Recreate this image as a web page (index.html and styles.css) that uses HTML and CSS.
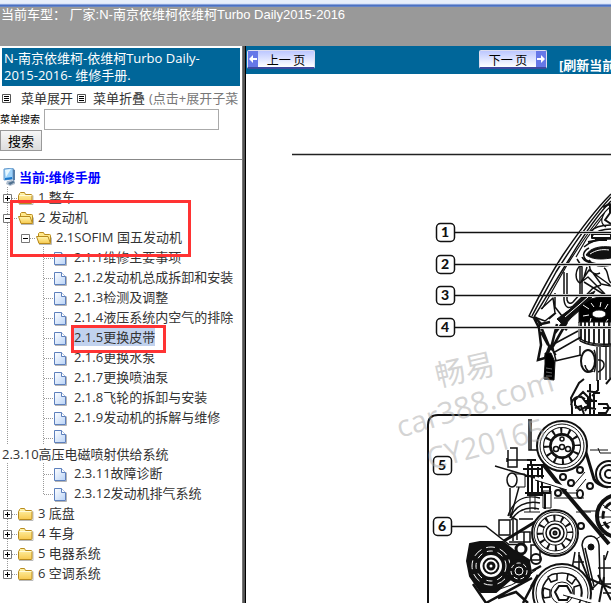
FILE: index.html
```
<!DOCTYPE html>
<html lang="zh-CN">
<head>
<meta charset="utf-8">
<title>维修手册</title>
<link rel="stylesheet" href="styles.css">
</head>
<body>
<svg class="defs" aria-hidden="true">
  <defs>
    <linearGradient id="gold" x1="0" y1="0" x2="0" y2="1"><stop offset="0" stop-color="#fff6b0"/><stop offset="1" stop-color="#f7c94e"/></linearGradient>
    <linearGradient id="paper" x1="0" y1="0" x2="1" y2="1"><stop offset="0" stop-color="#fff"/><stop offset="1" stop-color="#b9d3f7"/></linearGradient>
    <symbol id="folder" viewBox="0 0 18 20"><path d="M1 17.500h14v-9" fill="none" stroke="#bbb"/><path d="M.5 8.500q0-1 1-1v-1l1-1h4l1 2h5.500q1 0 1 1v7q0 1-1 1h-11.500q-1 0-1-1z" fill="url(#gold)" stroke="#b88a1d"/><path d="M1.500 8.500h12" stroke="#fffbd8"/></symbol>
    <symbol id="open" viewBox="0 0 18 20"><path d="M3 17.500h12.500v-7" fill="none" stroke="#bbb"/><path d="M2.500 10v-3.500l1-1h4l1 2h5q1 0 1 1v7h-12z" fill="#ffe88a" stroke="#b88a1d"/><path d="M.5 9.500h11.500l2.500 7h-11.500z" fill="url(#gold)" stroke="#b88a1d"/></symbol>
    <symbol id="doc" viewBox="0 0 18 20"><path d="M1 18.500h11.500v-9" fill="none" stroke="#b5b5b5"/><path d="M.5 5.500h7l4 4v8h-11z" fill="url(#paper)" stroke="#5d80bd"/><path d="M7.500 5.500v4h4" fill="#fff" stroke="#5d80bd"/></symbol>
    <symbol id="plus" viewBox="0 0 18 20"><path d="M3.500 7.500h8v8h-8z" fill="#fff" stroke="#777"/><path d="M5 11.500h5M7.500 9v5" stroke="#000"/></symbol>
    <symbol id="minus" viewBox="0 0 18 20"><path d="M3.500 7.500h8v8h-8z" fill="#fff" stroke="#777"/><path d="M5 11.500h5" stroke="#000"/></symbol>
    <symbol id="list" viewBox="0 0 9 9"><path d="M.5.5h8v8h-8z" fill="#fff" stroke="#555"/><path d="M2 2.500h5M2 4.500h5M2 6.500h5" stroke="#000"/></symbol>
  </defs>
</svg>
<div class="strip"></div>
<header class="model">当前车型： 厂家:N-南京依维柯依维柯Turbo Daily2015-2016</header>
<div class="frames">
  <aside class="sidebar">
    <h1 class="book">N-南京依维柯-依维柯Turbo Daily-<br>2015-2016- 维修手册.</h1>
    <div class="tools">
      <svg class="mini"><use href="#list"/></svg><a href="#">菜单展开</a>
      <svg class="mini"><use href="#list"/></svg><a href="#">菜单折叠</a>
      <span class="hint">(点击+展开子菜</span>
    </div>
    <form class="search">
      <label for="q">菜单搜索</label><input id="q" type="text">
      <button type="button">搜索</button>
    </form>
    <div class="current">
      <svg class="pc" viewBox="0 0 14 18"><path d="M1 1l9-1v11l-9 1z" fill="#9fd3fa" stroke="#6599cc"/><path d="M2 2l6-1-5 8z" fill="#e9f8ff"/><path d="M2 10l7-1v2l-7 1z" fill="#1676cc"/><path d="M10 1l2 1v10l-2 1z" fill="#577ea7"/><path d="M4 13l5-1 3 2v2l-5 2-4-2z" fill="#aebdce"/><path d="M5 15l5-2 2 1-5 3z" fill="#50718f"/></svg>
      <a href="#">当前:维修手册</a>
    </div>
    <ul class="tree">
      <li class="root"><div class="row branch"><svg class="knob"><use href="#plus"/></svg><svg class="icon"><use href="#folder"/></svg><a href="#">1 整车</a></div></li>
      <li class="root marked">
        <div class="row branch"><svg class="knob"><use href="#minus"/></svg><svg class="icon"><use href="#open"/></svg><a href="#">2 发动机</a></div>
        <ul>
          <li>
            <div class="row branch"><svg class="knob"><use href="#minus"/></svg><svg class="icon"><use href="#open"/></svg><a href="#">2.1SOFIM 国五发动机</a></div>
            <ul class="pages">
              <li class="row leaf"><svg class="icon"><use href="#doc"/></svg><a href="#">2.1.1维修主要事项</a></li>
              <li class="row leaf"><svg class="icon"><use href="#doc"/></svg><a href="#">2.1.2发动机总成拆卸和安装</a></li>
              <li class="row leaf"><svg class="icon"><use href="#doc"/></svg><a href="#">2.1.3检测及调整</a></li>
              <li class="row leaf"><svg class="icon"><use href="#doc"/></svg><a href="#">2.1.4液压系统内空气的排除</a></li>
              <li class="row leaf"><svg class="icon"><use href="#doc"/></svg><a class="selected" href="#">2.1.5更换皮带</a></li>
              <li class="row leaf"><svg class="icon"><use href="#doc"/></svg><a href="#">2.1.6更换水泵</a></li>
              <li class="row leaf"><svg class="icon"><use href="#doc"/></svg><a href="#">2.1.7更换喷油泵</a></li>
              <li class="row leaf"><svg class="icon"><use href="#doc"/></svg><a href="#">2.1.8飞轮的拆卸与安装</a></li>
              <li class="row leaf"><svg class="icon"><use href="#doc"/></svg><a href="#">2.1.9发动机的拆解与维修</a></li>
              <li class="wrapped"><div class="row leaf"><svg class="icon"><use href="#doc"/></svg></div><a href="#">2.3.10高压电磁喷射供给系统</a></li>
              <li class="row leaf"><svg class="icon"><use href="#doc"/></svg><a href="#">2.3.11故障诊断</a></li>
              <li class="row leaf last"><svg class="icon"><use href="#doc"/></svg><a href="#">2.3.12发动机排气系统</a></li>
            </ul>
          </li>
        </ul>
      </li>
      <li class="root"><div class="row branch"><svg class="knob"><use href="#plus"/></svg><svg class="icon"><use href="#folder"/></svg><a href="#">3 底盘</a></div></li>
      <li class="root"><div class="row branch"><svg class="knob"><use href="#plus"/></svg><svg class="icon"><use href="#folder"/></svg><a href="#">4 车身</a></div></li>
      <li class="root"><div class="row branch"><svg class="knob"><use href="#plus"/></svg><svg class="icon"><use href="#folder"/></svg><a href="#">5 电器系统</a></div></li>
      <li class="root end"><div class="row branch"><svg class="knob"><use href="#plus"/></svg><svg class="icon"><use href="#folder"/></svg><a href="#">6 空调系统</a></div></li>
    </ul>
  </aside>
  <div class="divider"></div>
  <main class="viewer">
    <nav class="pager">
      <button class="turn" type="button"><svg viewBox="0 0 10 16"><path d="M0 0h10v16H0z" fill="#6678e8"/><path d="M1 8l4-4v3h4v2H5v3z" fill="#fff"/></svg><span>上一 页</span></button>
      <button class="turn" type="button"><span>下一 页</span><svg viewBox="0 0 10 16"><path d="M0 0h10v16H0z" fill="#6678e8"/><path d="M9 8L5 4v3H1v2h4v3z" fill="#fff"/></svg></button>
      <a href="#">[刷新当前</a>
    </nav>
    <svg class="figure" viewBox="246 74 365 529" role="img" aria-label="发动机皮带示意图">
      <path d="M292 154.500h319" stroke="#222" stroke-width="1.500"/>
      <g fill="none" stroke="#111" stroke-linejoin="round">
        <path d="M611 194C594 211 580 230 563 255C548 278 537 300 529 316l5 2M611 201C597 215 585 233 570 258C556 280 545 299 534 317M611 197C590 220 575 242 556 272C548 287 538 304 532 316" stroke-width="1.500"/>
        <path d="M611 206C596 220 582 242 567 265L542 309M602 218l-15 20-11 19M605 212c-4 7-5 11 1 15" stroke-width="1.200"/>
        <path d="M590 232c4-5 10-7 21-7M592 236c5-6 12-7 19-7M584 247c6-5 16-9 27-8M589 248c-6 3-7 8-3 12 8 5 15 4 25 4M582 257c3 7 14 8 29 7M589 260c4 6 13 7 22 5" stroke-width="1.500"/>
        <path d="M586 255c5-8 15-9 25-8v11c-12 2-19 1-25-3z" fill="#111"/>
        <path d="M590 254c6-4 12-5 19-4" stroke="#fff"/>
        <path d="M592 234h19v4h-19zM595 240h12M588 242l22-4M603 207l7-3v9l-5 7 6 4" stroke-width="2"/>
        <path d="M564 272v28c1 8 5 9 9 6l9-9v-30l-5-8M567 273v27c1 4 4 4 6 2l7-8v-29M555 293v14l7 9 13-9 18-19 8-3M541 309l12-11 2 15-10 8-11-4M549 319l7-6" stroke-width="1.500"/>
        <path d="M582 264c-8 6-7 16-2 19l8-6 17 17M581 282l8-12 21 15M587 267l-3 10M590 263c-2 8 4 13 10 10M604 268c5 2 3 12 7 15M584 282l24 15M593 273l8 11 10 2" stroke-width="1.500"/>
        <path d="M557 319l12-9 14-13 12-6-6 11-18 16-7 8z" fill="#111"/><path d="M565 317l14-12 9-8" stroke="#fff"/>
      </g>
      <g stroke="#111">
        <path d="M579 307l12-8 8-2h12v26h-32z"/><ellipse cx="599" cy="314" rx="7" ry="4" fill="#fff"/>
        <path d="M583 305l6 4M583 316l6-1M591 303l3 4M601 302l-1 5M591 318l-1 4M608 304l-3 5M608 319l-2 3" stroke="#fff" stroke-width="1"/>
        <path d="M579 322h32v23c-11 1-23 0-32-5z" fill="#fff"/>
        <path d="M581 322v18M585 322v20M589 322v21M594 322v21M599 322v21M604 322v22M609 322v22" stroke-width="1.800"/>
        <path d="M579 338c8 6 19 7 32 6M580 341c9 5 20 6 31 5M597 347v34M600 347v33M606 347v33M610 347v31" fill="none" stroke-width="1.400"/>
        <ellipse cx="588" cy="361" rx="7" ry="11" fill="#fff" stroke-width="2"/><path d="M585 365c1 6 5 8 8 6M580 346v10M594 350c2 3 2 19 0 22M598 360c7-1 9 8 0 12" fill="none" stroke-width="1.500"/>
        <path d="M534 318l5 10 2 17-3 15 7-2 5-13M535 317l6 7 9-2M539 322l10 24M557 324l-5 20-6 13M567 322l-7 12-9 16M541 332l7 13M555 333l6-8 6 5" fill="none" stroke-width="2.500"/>
        <path d="M553 353l28-16M555 361l26-6M552 345l26-14M553 348l3 13M550 347l6 8" fill="none" stroke-width="1.500"/>
        <path d="M545 353h6l4 9-1 18-10-1 1-15z"/><path d="M546 368l6 1M546 372l6 1M546 376l6 0" stroke="#666"/>
        <path d="M572 414l-1-16 8-15 10-3 1 14 6 5-1 9 16 2v4z" fill="#fff" stroke="none"/>
        <path d="M572 414v-6l-1-10 8-15 5-4M571 405c2-9 8-10 14-6M575 400l8-8 5 5v9l-8 4-5-5zM581 396l6 8M575 408l6-2 3 8M590 384v30M594 391v23M598 380v10l-6 6M587 391l13 2M585 401h12M584 407l12 2M598 404h9l2 4-3 5h-8M603 408h8M592 399l-7 12M606 384l5-6" fill="none" stroke-width="2"/>
      </g>
      <g fill="none" stroke="#111">
        <path d="M428 603V425q0-10 10-10h173" stroke-width="2"/>
        <path d="M531 419v31M529 419v31h10M510 448h7v19h-9v-17M508 460h22M507 458v4M510 488v28M519 487l-8 29" stroke-width="1.500"/>
        <ellipse cx="512" cy="480" rx="5" ry="7" fill="#fff" stroke-width="1.500"/><path d="M515 474h10v13h-9"/>
        <path d="M528 465h14v30h-14zM532 464v31M538 467v28M523 469h19M525 476h19M525 493h18M540 487h10v6h-10M531 459v7M527 460h9M545 493v16" stroke-width="2"/>
        <path d="M508 516c5-15 16-22 32-18M510 518c5-12 16-18 30-15M511 520c7-10 16-14 28-11" stroke-width="1.500"/>
        <path d="M543 491h8v17h-8zM530 496v16M535 494v16M524 512h16M554 498h30M560 493h21M576 512h15M572 487l13-15M576 491l10-12M590 450h18M598 448l2 5h11M583 511h14l3-4"/>
        <g fill="#fff" stroke-width="2"><circle cx="563" cy="477" r="3"/><circle cx="571" cy="483" r="3"/><circle cx="580" cy="470" r="3"/><circle cx="590" cy="486" r="3"/><circle cx="558" cy="493" r="3"/><ellipse cx="580" cy="494" rx="3" ry="4"/></g>
        <path d="M543 464l22 28 44 52" stroke-width="4"/><path d="M584 446l10 33q3 6 14 8" stroke-width="3"/>
        <path d="M504 541l31-19" stroke-width="3"/><path d="M485 592q27-3 51-22M590 543l19-12"/>
        <circle cx="609" cy="474" r="13" fill="#fff" stroke-width="2"/><circle cx="609" cy="474" r="9" stroke-width="2"/><circle cx="609" cy="474" r="4" stroke-width="2"/>
        <circle cx="618" cy="516" r="21" fill="#fff" stroke-width="4"/><circle cx="618" cy="516" r="15" stroke-width="3" stroke-dasharray="8 3"/><path d="M603 505l8 6M598 517h13M601 526l10-4"/>
        <path d="M499 520h11v15h-11zM510 516l7 4v20M513 519v22M519 519h14M509 542h22M524 532v13M519 532h11v10M531 545h9v15h-9z" stroke-width="1.500"/>
        <circle cx="521" cy="549" r="5" fill="#fff" stroke-width="3"/><circle cx="536" cy="559" r="5" stroke-width="2"/><circle cx="581" cy="526" r="3" stroke-width="2"/>
        <path d="M582 545q1-9 9-9 7 1 8 9l1 36-8 8z" fill="#fff" stroke-width="1.500"/><path d="M585 548l9 38M575 552l-3 17M579 552v17M574 562h10M598 568h13M602 584h9M603 593h8M604 555v29M608 551l-3 9" stroke-width="1.500"/><circle cx="591" cy="547" r="3" fill="#111"/>
        <path d="M579 555l14 35M590 579l21 9M598 575l13 25M604 577l-5 26" stroke-width="2"/>
      </g>
      <g fill="none" stroke="#111">
        <circle cx="562" cy="446" r="25" fill="#fff" stroke-width="2"/><circle cx="562" cy="446" r="22"/><circle cx="562" cy="446" r="15" stroke-width="8"/><circle cx="562" cy="446" r="15.500" stroke="#fff" stroke-width="5" stroke-dasharray="6 2.100"/><circle cx="562" cy="446" r="11" fill="#fff" stroke-width="1.500"/>
      </g>
      <g fill="#fff" stroke="#111" stroke-width="1.500"><circle cx="562" cy="439" r="2"/><circle cx="556" cy="449" r="2.500"/><circle cx="568" cy="449" r="2.500"/><circle cx="562" cy="447" r="2.500"/></g>
      <g fill="none" stroke="#111">
        <circle cx="555" cy="533" r="23" fill="#fff" stroke-width="2"/><circle cx="555" cy="533" r="21"/><circle cx="555" cy="533" r="15" stroke-width="7"/><circle cx="555" cy="533" r="15" stroke="#fff" stroke-width="5" stroke-dasharray="5.800 2.050"/><circle cx="555" cy="533" r="9" fill="#fff" stroke-width="1.500"/><circle cx="555" cy="533" r="5" stroke-width="2"/><circle cx="555" cy="533" r="1.500" stroke-width="2"/>
      </g>
      <g fill="none" stroke="#111">
        <path d="M470 544l10-2h23l10 8 16 10 2 13-19 5-16 14h-15l-11-16-3-15z" fill="#111" stroke-width="2"/>
        <circle cx="491" cy="566" r="19" stroke="#fff" stroke-dasharray="9 5"/><circle cx="491" cy="566" r="15" stroke="#fff" stroke-dasharray="6 5"/>
        <circle cx="491" cy="566" r="12" fill="#fff" stroke-width="2"/><circle cx="491" cy="566" r="7.500" stroke-width="2"/><circle cx="491" cy="566" r="3" stroke-width="3"/>
        <circle cx="519" cy="571" r="12" fill="#111"/><circle cx="519" cy="571" r="8" stroke="#fff" stroke-dasharray="4 3"/><circle cx="519" cy="571" r="4" stroke="#fff"/>
        <path d="M473 584l13 19M486 603l46-25M498 598l18-6 12 11M533 584l-10 19M532 571l9-5M538 575l-7 12" stroke-width="2.500"/>
        <circle cx="562" cy="593" r="29" fill="#fff" stroke-width="2"/><circle cx="562" cy="593" r="26"/><circle cx="562" cy="593" r="20" stroke-width="1.500"/>
        <g fill="#fff" stroke-width="1.500"><path d="M551 582l-3-5q5-4 9-3v6zM567 580l1-6q5 1 8 4l-4 6zM544 588l6 2v7l-6 1q-2-5 0-10zM574 587l6-2q3 8 0 14l-6-3z"/></g>
        <circle cx="562" cy="593" r="11" fill="#fff"/><path d="M555 592l4-6h8l4 7-4 7h-8z" stroke-width="2"/>
      </g>
      <g stroke="#fff" stroke-width="3"><path d="M580 232.500h31M558 264.500h53M554 295.500h57M540 327.500h71"/></g>
      <g stroke="#111" stroke-width="1.500" fill="none"><path d="M454 232.500h157M454 264.500h157M454 295.500h157M454 327.500h157M451 526.500h35l23 18h10M495 466l40 12"/></g>
      <path d="M535 478l34 11M563 593l48 14" stroke="#fff" stroke-width="3"/>
      <path d="M535 480l32 10M563 595l48 14" stroke="#111"/>
      <g class="tags"><rect x="436.500" y="223.500" width="18" height="18" rx="4"/><rect x="436.500" y="255.500" width="18" height="18" rx="4"/><rect x="436.500" y="286.500" width="18" height="18" rx="4"/><rect x="436.500" y="318.500" width="18" height="18" rx="4"/><rect x="433.500" y="456.500" width="18" height="18" rx="4"/><rect x="433.500" y="517.500" width="18" height="18" rx="4"/></g>
      <g class="nums"><text x="445" y="237">1</text><text x="445" y="269">2</text><text x="445" y="300">3</text><text x="445" y="332">4</text><text x="442" y="470">5</text><text x="442" y="531">6</text></g>
      <g class="stamp"><text class="cjk" transform="translate(438 387) rotate(-13)">畅易</text><text transform="translate(400 438) rotate(-17)">car388.com</text><text transform="translate(430 470) rotate(-15)">CY20165</text></g>
    </svg>
  </main>
</div>
</body>
</html>
```
FILE: styles.css
```
*, *::after { box-sizing: border-box; }
body {
  margin: 0;
  height: 100vh;
  display: flex;
  flex-direction: column;
  overflow: hidden;
  background: #fff;
  color: #333;
  font: 13px/20px "Open Sans", "Noto Sans CJK SC", sans-serif;
}
a { color: inherit; text-decoration: none; white-space: nowrap; }
ul { list-style: none; margin: 0; padding: 0; }
svg { flex: none; }
.defs { position: absolute; width: 0; height: 0; }
.strip {
  flex: none;
  height: 7px;
  background: linear-gradient(#e8effb 0 3px, #d1dcf5 4px, #3f68c0 5px, #6f8bc8 7px);
}
.model {
  flex: none;
  height: 39px;
  padding-left: 1px;
  background: #999;
  color: #fff;
  font: 13px/15px "Liberation Sans", "Noto Sans CJK SC", sans-serif;
  white-space: nowrap;
}
.frames { flex: 1; display: flex; min-height: 0; }
.sidebar {
  flex: none;
  width: 242px;
  overflow: hidden;
}
.divider {
  flex: none;
  width: 4px;
  background: linear-gradient(90deg, #777 0 1px, #555 1px 3px, #000 3px);
}
.book {
  margin: 2px 2px 0;
  padding: 2px;
  background: #069;
  color: #fff;
  font-size: 13px;
  font-weight: 400;
  line-height: 17px;
  white-space: nowrap;
}
.tools { display: flex; align-items: center; padding: 2px 0 0 2px; white-space: nowrap; }
.mini { width: 9px; height: 9px; }
.tools a { margin: 0 4px 0 10px; }
.tools a + .mini + a { margin-left: 7px; }
.hint { color: #777; }
.search { display: flex; flex-wrap: wrap; align-items: center; border-bottom: 1px solid #888; padding-bottom: 8px; color: #000; }
.search label { width: 44px; font-size: 10px; }
.search input { width: 175px; height: 21px; margin-top: 1px; border: 1px solid #aaa; padding: 0 2px; }
.search button {
  width: 42px;
  height: 21px;
  padding: 0;
  border: 1px solid #999;
  background: linear-gradient(#f6f6f6, #ddd);
  font: inherit;
  line-height: 18px;
}
.current { display: flex; align-items: center; padding: 7px 0 0 3px; gap: 2px; color: #00f; font-weight: 700; }
.pc { width: 14px; height: 18px; }
.row { display: flex; height: 20px; line-height: 20px; }
.knob { width: 18px; height: 20px; }
.icon { width: 18px; height: 20px; margin-right: 2px; }
.root {
  background: repeating-linear-gradient(#999 0 1px, transparent 1px 2px) 7px 0 / 1px 100% no-repeat;
}
.root.end { background-size: 1px 10px; }
.branch {
  background: repeating-linear-gradient(90deg, #999 0 1px, transparent 1px 2px) 12px 11px / 6px 1px no-repeat;
}
.marked > ul { padding-left: 18px; }
.marked { position: relative; }
.marked::after {
  content: "";
  position: absolute;
  left: 10px;
  top: -7px;
  width: 181px;
  height: 57px;
  border: 3px solid #f33;
}
.leaf {
  padding-left: 36px;
  background: repeating-linear-gradient(#999 0 1px, transparent 1px 2px) 25px 0 / 1px 100% no-repeat,
    repeating-linear-gradient(90deg, #999 0 1px, transparent 1px 2px) 26px 11px / 10px 1px no-repeat;
}
.leaf.last { background-size: 1px 11px, 10px 1px; }
.selected { position: relative; height: 19px; background: #c1d2ee; }
.selected::after {
  content: "";
  position: absolute;
  left: -3px;
  top: -2px;
  width: 95px;
  height: 28px;
  border: 3px solid #f33;
}
.wrapped > .row { height: 18px; }
.wrapped > .row .icon { margin-top: -2px; }
.wrapped > a {
  display: block;
  width: max-content;
  margin-left: -18px;
  padding-left: 2px;
  line-height: 18px;
  background: #fff;
}
.viewer { flex: 1; min-width: 0; overflow: hidden; }
.pager {
  display: flex;
  align-items: flex-start;
  height: 28px;
  padding: 4px 1px;
  background: #069;
  color: #fff;
  font-weight: 700;
}
.pager > a { margin: 6px 0 0 12px; line-height: 18px; }
.turn {
  display: flex;
  flex: none;
  align-items: center;
  width: 68px;
  height: 19px;
  padding: 0;
  border: 1px solid #dde;
  border-bottom: 2px solid #3d4aa0;
  border-radius: 2px;
  background: linear-gradient(#bcc7ff, #fff);
  color: #000;
  font: 12px/15px "Noto Sans CJK SC", sans-serif;
}
.turn span { flex: 1; white-space: nowrap; }
.turn svg { width: 10px; height: 16px; }
.turn + .turn { margin-left: 164px; }
.figure { display: block; width: 365px; height: 529px; }
.tags { fill: #fff; stroke: #111; stroke-width: 1.5px; }
.nums { font: 900 14px Lato, sans-serif; text-anchor: middle; fill: #111; }
.stamp { font: 30px "Open Sans", sans-serif; fill: #aaa; fill-opacity: .5; }
.stamp .cjk { font-family: "Noto Sans CJK SC", sans-serif; }
```
